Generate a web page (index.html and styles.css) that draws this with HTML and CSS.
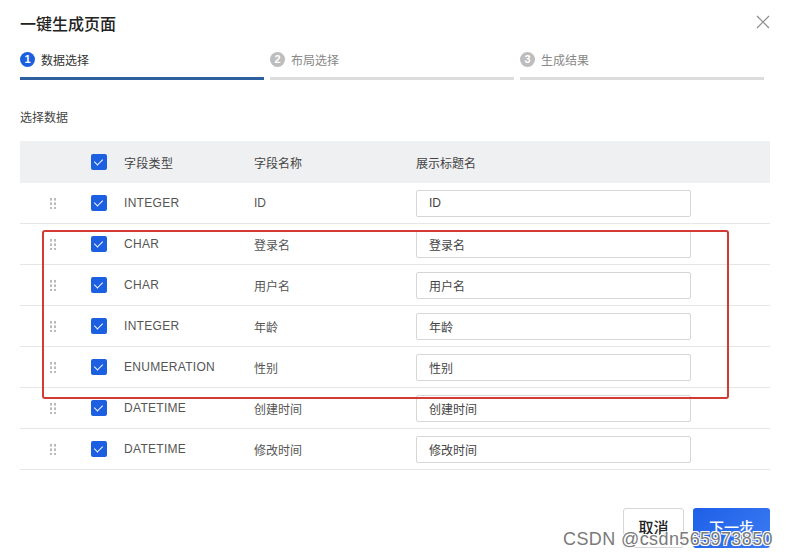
FILE: index.html
```html
<!DOCTYPE html>
<html lang="zh-CN">
<head>
  <meta charset="UTF-8">
  <title>一键生成页面</title>
  <link rel="stylesheet" href="styles.css">
</head>
<body>
  <div class="dialog">
    <div class="dialog-head">
      <h2>一键生成页面</h2>
      <svg class="close" width="14" height="14" viewBox="0 0 14 14"><path d="M1 1L13 13M13 1L1 13" stroke="#8a8a8a" stroke-width="1.2" fill="none"/></svg>
    </div>

    <div class="steps">
      <div class="step active"><span class="num">1</span>数据选择</div>
      <div class="step"><span class="num">2</span>布局选择</div>
      <div class="step"><span class="num">3</span>生成结果</div>
    </div>

    <div class="label">选择数据</div>

    <div class="table">
      <div class="row head">
        <div class="c-drag"></div>
        <div class="c-check"><span class="cb"></span></div>
        <div class="c-type">字段类型</div>
        <div class="c-name">字段名称</div>
        <div class="c-title">展示标题名</div>
      </div>
      <div class="row">
        <div class="c-drag"><span class="dots"></span></div>
        <div class="c-check"><span class="cb"></span></div>
        <div class="c-type">INTEGER</div>
        <div class="c-name">ID</div>
        <div class="c-title"><input value="ID"></div>
      </div>
      <div class="row">
        <div class="c-drag"><span class="dots"></span></div>
        <div class="c-check"><span class="cb"></span></div>
        <div class="c-type">CHAR</div>
        <div class="c-name">登录名</div>
        <div class="c-title"><input value="登录名"></div>
      </div>
      <div class="row">
        <div class="c-drag"><span class="dots"></span></div>
        <div class="c-check"><span class="cb"></span></div>
        <div class="c-type">CHAR</div>
        <div class="c-name">用户名</div>
        <div class="c-title"><input value="用户名"></div>
      </div>
      <div class="row">
        <div class="c-drag"><span class="dots"></span></div>
        <div class="c-check"><span class="cb"></span></div>
        <div class="c-type">INTEGER</div>
        <div class="c-name">年龄</div>
        <div class="c-title"><input value="年龄"></div>
      </div>
      <div class="row">
        <div class="c-drag"><span class="dots"></span></div>
        <div class="c-check"><span class="cb"></span></div>
        <div class="c-type">ENUMERATION</div>
        <div class="c-name">性别</div>
        <div class="c-title"><input value="性别"></div>
      </div>
      <div class="row">
        <div class="c-drag"><span class="dots"></span></div>
        <div class="c-check"><span class="cb"></span></div>
        <div class="c-type">DATETIME</div>
        <div class="c-name">创建时间</div>
        <div class="c-title"><input value="创建时间"></div>
      </div>
      <div class="row">
        <div class="c-drag"><span class="dots"></span></div>
        <div class="c-check"><span class="cb"></span></div>
        <div class="c-type">DATETIME</div>
        <div class="c-name">修改时间</div>
        <div class="c-title"><input value="修改时间"></div>
      </div>
      <div class="mark"></div>
    </div>

    <div class="footer">
      <button class="btn">取消</button>
      <button class="btn primary">下一步</button>
    </div>
  </div>
  <div class="watermark">CSDN @csdn565973850</div>
</body>
</html>
```

FILE: styles.css
```css
body {
  margin: 0;
  background: #fff;
  font-family: "Liberation Sans", "Noto Sans CJK SC", sans-serif;
  color: #555;
  overflow: hidden;
  height: 556px;
  position: relative;
}
.dialog {
  padding: 12px 18px 0 20px;
}
.dialog-head {
  display: flex;
  justify-content: space-between;
  align-items: center;
  height: 22px;
}
.dialog-head h2 {
  margin: 0;
  font-size: 16px;
  font-weight: 500;
  color: #222;
}
.close {
  margin-top: -2px;
}
.steps {
  display: flex;
  gap: 6px;
  margin-top: 13px;
  width: 744px;
}
.step {
  flex: 1;
  display: flex;
  align-items: center;
  gap: 6px;
  height: 24px;
  font-size: 12px;
  color: #888;
  border-bottom: 3px solid #dcdcdc;
  padding-bottom: 6px;
}
.step .num {
  width: 15px;
  height: 15px;
  border-radius: 50%;
  background: #bdbdbd;
  color: #fff;
  font-size: 11px;
  display: flex;
  align-items: center;
  justify-content: center;
  font-weight: bold;
}
.step.active {
  color: #333;
  border-bottom-color: #2e5f9e;
}
.step.active .num {
  background: #1b5fe0;
}
.label {
  font-size: 12px;
  color: #444;
  margin-top: 28px;
  height: 21px;
}
.table {
  position: relative;
  margin-top: 12px;
  width: 750px;
}
.row {
  display: flex;
  align-items: center;
  height: 40px;
  border-bottom: 1px solid #e6e6e6;
  font-size: 12px;
  color: #555;
}
.row.head {
  height: 42px;
  background: #eff0f2;
  border-bottom: none;
  color: #444;
}
.c-drag {
  width: 73px;
  display: flex;
  justify-content: center;
  box-sizing: border-box;
  padding-right: 7px;
}
.c-check {
  width: 33px;
  margin-left: -2px;
}
.c-type {
  width: 130px;
  letter-spacing: 0.3px;
}
.c-name {
  width: 162px;
}
.c-title {
  flex: 1;
}
.cb {
  display: block;
  width: 16px;
  height: 16px;
  border-radius: 2px;
  background: #1d5fe1;
  position: relative;
}
.cb::after {
  content: "";
  position: absolute;
  left: 5px;
  top: 3px;
  width: 4px;
  height: 7px;
  border: solid #fff;
  border-width: 0 1.5px 1.5px 0;
  transform: rotate(45deg);
}
.dots {
  width: 8px;
  height: 12px;
  background-image: radial-gradient(circle, #bbb 1.1px, transparent 1.3px);
  background-size: 4px 4.5px;
  background-position: 0 0;
}
.c-title input {
  width: 275px;
  height: 27px;
  box-sizing: border-box;
  border: 1px solid #d6d6d6;
  border-radius: 2px;
  padding: 0 12px;
  font: inherit;
  font-size: 12px;
  color: #444;
  outline: none;
}
.mark {
  position: absolute;
  left: 22px;
  top: 89px;
  width: 683px;
  height: 165px;
  border: 2px solid #d23a33;
  border-radius: 3px;
}
.footer {
  display: flex;
  justify-content: flex-end;
  gap: 9px;
  margin-top: 38px;
  width: 750px;
}
.btn {
  height: 40px;
  width: 61px;
  padding: 0 0 4px;
  border: 1px solid #d6d6d6;
  border-radius: 3px;
  background: #fff;
  font-family: inherit;
  font-size: 15px;
  font-weight: 500;
  color: #222;
  white-space: nowrap;
}
.btn.primary {
  border: none;
  background: linear-gradient(135deg, #1e5fe8, #3b7bf2);
  color: #fff;
  width: 77px;
}
.watermark {
  position: absolute;
  right: 15px;
  bottom: 6px;
  font-size: 18px;
  letter-spacing: 0.4px;
  color: #7a7a7a;
  font-family: "Liberation Sans", sans-serif;
  text-shadow: 0 0 1px #fff, 1px 1px 0 #fff, -1px -1px 0 #fff, 1px -1px 0 #fff, -1px 1px 0 #fff;
}
```
